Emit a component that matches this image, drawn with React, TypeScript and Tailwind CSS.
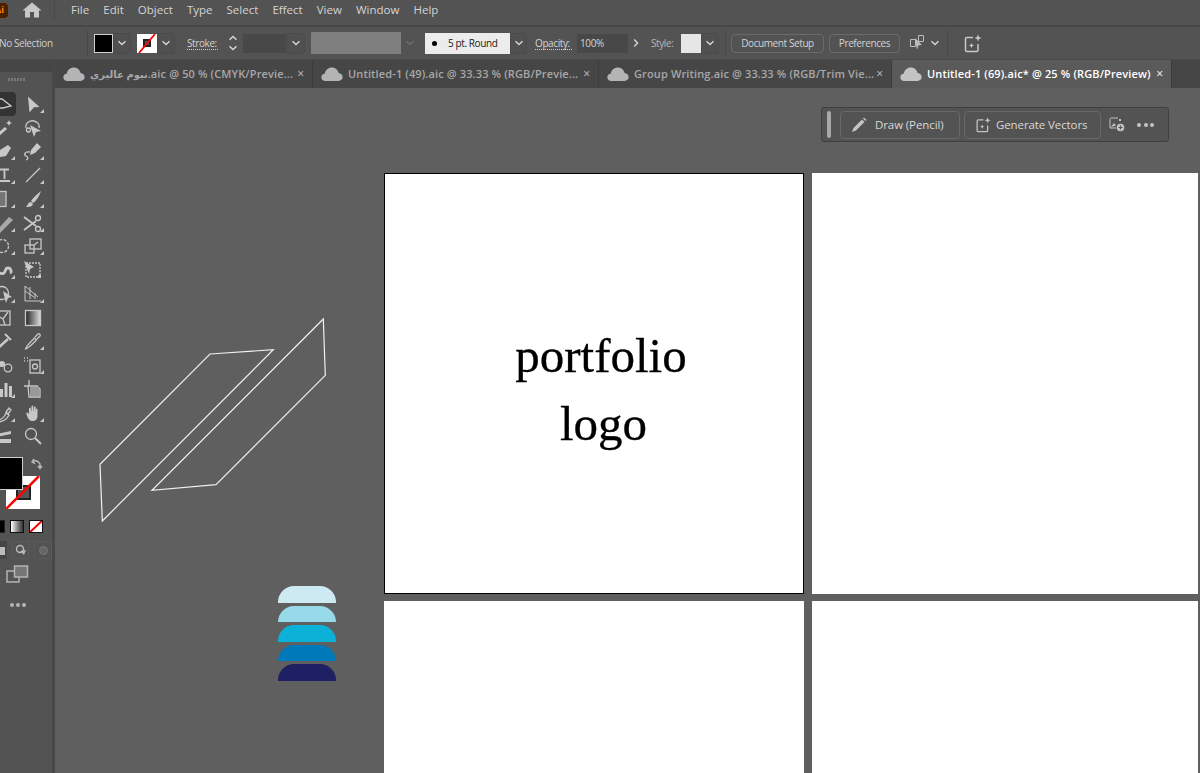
import type { ReactNode } from 'react';

const ui = { fontFamily: '"Open Sans", "DejaVu Sans", sans-serif' };

function Chevron({ className = 'text-[#d6d6d6]' }: { className?: string }) {
  return (
    <svg className={`h-2.5 w-2.5 ${className}`} viewBox="0 0 10 10" fill="none" stroke="currentColor" strokeWidth={1.4}>
      <path d="M1.5 3.2 5 6.6l3.5-3.4" />
    </svg>
  );
}

function ChevronBox({ className = 'w-[18px]' }: { className?: string }) {
  return (
    <div className={`flex h-[21px] items-center justify-center rounded-r-sm border border-[#4b4b4b] bg-[#505050] ${className}`}>
      <Chevron />
    </div>
  );
}

function Cloud({ className = 'text-[#b8b8b8]' }: { className?: string }) {
  return (
    <svg className={`h-[14px] w-[22px] shrink-0 ${className}`} viewBox="0 0 22 14" fill="currentColor">
      <path d="M4.5 14C2 14 .3 12.4.3 10.3c0-2 1.5-3.5 3.4-3.6C4.4 3 7.3.5 10.8.5c3.3 0 6 2.200 6.800 5.400 2.300.2 4.100 2 4.100 4.200 0 2.200-1.800 3.900-4.200 3.900z" />
    </svg>
  );
}

function Tab({ children, width, active }: { children: ReactNode; width: string; active?: boolean }) {
  return (
    <div className={`flex h-full shrink-0 items-center border-r border-[#3d3d3d] pl-[8px] ${width} ${active ? 'bg-[#5a5a5a]' : ''}`}>
      <Cloud className={active ? 'text-[#c4c4c4]' : 'text-[#b4b4b4]'} />
      <span className={`ml-[5px] whitespace-nowrap text-[11px] font-semibold tracking-[0.13px] ${active ? 'text-white' : 'text-[#a8a8a8]'}`}>{children}</span>
      <span className={`ml-auto mr-[8px] text-[12px] leading-none ${active ? 'text-white' : 'text-[#c0c0c0]'}`}>×</span>
    </div>
  );
}

// tool icon cell, with the little flyout triangle in the lower right corner
function Tool({ children, flyout = true, selected }: { children: ReactNode; flyout?: boolean; selected?: boolean }) {
  return (
    <div className={`relative flex h-[23.750px] w-6 items-center justify-center text-[#c8c8c8] ${selected ? 'rounded-sm bg-[#333333]' : ''}`}>
      <svg className="h-5 w-5" viewBox="0 0 20 20" fill="none" stroke="currentColor" strokeWidth={1.3}>
        {children}
      </svg>
      {flyout && <div className="absolute bottom-[3px] right-[1px] h-0 w-0 border-b-[4px] border-l-[4px] border-b-[#c8c8c8] border-l-transparent" />}
    </div>
  );
}

const solid = { fill: 'currentColor', stroke: 'none' };

// left column is cut by the window edge, only x >= 6 of each icon shows
const tools: { icon: ReactNode; flyout?: boolean; selected?: boolean }[] = [
  { icon: <path d="M2 5h6l9 7-8 2H2" />, flyout: false, selected: true },
  { icon: <path d="M5 2.500 16.500 13 11 13.300 6.500 18.500z" {...solid} /> },
  { icon: <><path d="M3 18 12 10" strokeWidth={3} /><path d="m15 2 .9 2.100L18 5l-2.100.9L15 8l-.9-2.100L12 5l2.100-.9z" {...solid} /></>, flyout: false },
  { icon: <><path d="M3 10C2 5 7 2 11 3c4 1 6 4 5 7" /><path d="M7 7l11 6-5 1-2 5z" {...solid} /><circle cx="5.500" cy="12" r="2" /></>, flyout: false },
  { icon: <path d="M6 16V9l8-5 3 3-5 8z" {...solid} /> },
  { icon: <><path d="M8 9l6-7 4 4-6 6-5 2z" {...solid} /><path d="M7 11C1 10 1 14 3 15s3 3 0 4" /></> },
  { icon: <path d="M6 4.500h9M10.500 4.500v9.500M6 16h10" strokeWidth={1.800} /> },
  { icon: <path d="M3 17 17 3" /> },
  { icon: <rect x="-4" y="2.500" width="16" height="15" fill="#747474" /> },
  { icon: <><path d="M18 2C14 5 10 9 8 12l2 2c3-2 6-6 8-12z" {...solid} /><path d="M8 13c-3 0-3 3-5 5 3 0 6 0 7-3z" {...solid} /></> },
  { icon: <path d="M1 19 15 4l4 3L5 21z" fill="#a8a8a8" stroke="none" /> },
  { icon: <><circle cx="15" cy="5" r="2.500" /><circle cx="15" cy="16" r="2.500" /><path d="M1 4l12 9M1 17l12-9" strokeWidth={1.800} /></> },
  { icon: <circle cx="8" cy="10" r="6.500" strokeDasharray="3 1.500" /> },
  { icon: <><rect x="2" y="9" width="9" height="8" /><rect x="7" y="3" width="11" height="10" /><path d="m11 9 4-3" /></> },
  { icon: <path d="M3 15c3-4 5 0 7-2s1-5 4-5 4 4 2 5" strokeWidth={2.800} /> },
  { icon: <><rect x="3" y="3" width="14" height="14" strokeDasharray="2 1" /><path d="M1 1l10 6-4 2-1 5z" {...solid} /><rect x="15" y="15" width="3" height="3" {...solid} /></>, flyout: false },
  { icon: <><circle cx="8" cy="9" r="6.500" /><path d="M9 7l9 6-4 1-2 5z" {...solid} /></> },
  { icon: <path d="M2 2v15h16M2 2l13 11M2 7l9 6M7 3v12M12 9v6" strokeWidth={1} /> },
  { icon: <><rect x="2" y="3" width="14" height="14" /><path d="M4 8l5 3 5-7M9 11l2 6" /></>, flyout: false },
  { icon: <><defs><linearGradient id="grad" x1="0" x2="1" y1="0" y2="0"><stop offset="0" stopColor="#222" /><stop offset="1" stopColor="#ddd" /></linearGradient></defs><rect x="2.500" y="2.500" width="15" height="15" fill="url(#grad)" /></>, flyout: false },
  { icon: <><path d="M4 17 14 8" strokeWidth={2.500} /><path d="M11 3l6 6" strokeWidth={2} /></>, flyout: false },
  { icon: <path d="M2.500 18c0-2 7-9 9-11l2 2c-2 2-9 9-11 9zM12 6l3-3c1-1 3 1 2 2l-3 3" /> },
  { icon: <><circle cx="8" cy="9" r="3" {...solid} /><circle cx="14" cy="13" r="3.800" /></>, flyout: false },
  { icon: <><rect x="7" y="5" width="10" height="13" /><circle cx="12" cy="11.500" r="2.500" /><path d="M1 3h1M4 3h1M1 6h1M4 6h1" strokeWidth={1.500} /></> },
  { icon: <path d="M6 10h3v8H6zM10.500 4h3v14h-3zM15 7h3v11h-3z" {...solid} /> },
  { icon: <><path d="M6 1v6H1M5 7h9l3 3v8H6z" /><rect x="7" y="8" width="9" height="9" fill="#999" stroke="none" /></>, flyout: false },
  { icon: <path d="M3 17c5 0 8-4 9-7l3 2c-2 4-6 7-12 7zM12 9l3-4 2 2-3 4z" /> },
  { icon: <path d="M6 11V5l1.500-.5L8.500 9V3l1.500-.5L11 9V3.500l1.500 0L13 10V5.500l1.500.5V13c0 3-2 5-5 5-3 0-4-2-5-4L3 10l1.500-.5z" {...solid} /> },
  { icon: <path d="M2 8l15-3v3L2 11zM2 13h15v4H2z" {...solid} />, flyout: false },
  { icon: <><circle cx="8" cy="8" r="5.500" /><path d="m12 12 6 6" strokeWidth={2} /></>, flyout: false },
];

function Toolbar() {
  return (
    <aside className="flex h-full w-[55px] shrink-0 flex-col overflow-hidden border-r-[3px] border-[#484848] bg-[#535353]">
      <div className="h-[12px] shrink-0 bg-[#464646]" />
      <div className="-ml-[8px] flex flex-col">
        <div className="flex h-[14px] items-center pl-[16px]">
          <div className="h-[3px] w-[17px] bg-[repeating-linear-gradient(90deg,#777_0_2px,transparent_2px_3px)]" />
        </div>
        <div className="h-[6px]" />
        <div className="grid grid-cols-[24px_24px] gap-x-[5px]">
          {tools.map((t, i) => (
            <Tool key={i} flyout={t.flyout} selected={t.selected}>{t.icon}</Tool>
          ))}
        </div>
        {/* fill and stroke */}
        <div className="relative ml-[8px] mt-[9px] h-[54px] w-[46px]">
          <div className="absolute bottom-[2px] right-[6px] flex h-[33px] w-[34px] items-center justify-center bg-white">
            <div className="h-[15px] w-[15px] border-2 border-[#222] bg-[#555]" />
            <svg className="absolute inset-0 h-full w-full" viewBox="0 0 34 33"><path d="M0 33 33 0" stroke="#f00" strokeWidth={2.500} /></svg>
          </div>
          <div className="absolute left-0 top-0 h-[33px] w-[23px] border border-[#cfcfcf] border-l-0 bg-black" />
          <svg className="absolute right-[3px] top-[1px] h-3 w-3 text-[#b8b8b8]" viewBox="0 0 12 12" fill="none" stroke="currentColor" strokeWidth={1.500}>
            <path d="M1 4c2-2 6-2 8 2v4M7 8l2 2.500L11 8M3 1 1 4l3 1.500" />
          </svg>
        </div>
        <div className="ml-[8px] mt-[8px] flex h-[14px] items-center gap-[5px]">
          <div className="h-[13px] w-[5px] border border-l-0 border-[#222] bg-black" />
          <div className="h-[13px] w-[14px] border border-[#111] bg-gradient-to-r from-white to-[#333]" />
          <div className="relative h-[13px] w-[14px] overflow-hidden border border-[#111] bg-white">
            <svg className="absolute inset-0 h-full w-full" viewBox="0 0 14 13"><path d="M0 13 14 0" stroke="#f00" strokeWidth={2.500} /></svg>
          </div>
        </div>
        <div className="ml-[8px] mt-[8px] flex h-[18px] items-center gap-[5px] text-[#b8b8b8]">
          <div className="flex h-[18px] w-[7px] items-end bg-[#454545]"><div className="mb-1 h-2 w-[5px] bg-[#bbb]" /></div>
          <div className="flex h-[18px] w-[18px] items-center justify-center border border-[#5a5a5a]">
            <svg className="h-3 w-3" viewBox="0 0 12 12"><circle cx="5" cy="5" r="3.500" fill="none" stroke="currentColor" strokeWidth={1.500} /><path d="M5 7l6-1-2 5z" fill="currentColor" /></svg>
          </div>
          <div className="flex h-[18px] w-[18px] items-center justify-center border border-[#5a5a5a]">
            <div className="h-[9px] w-[9px] rounded-full border border-[#777] bg-[#666]" />
          </div>
        </div>
        <div className="ml-[14px] mt-[6px]">
          <svg className="h-[18px] w-[24px] text-[#b4b4b4]" viewBox="0 0 24 18" fill="none" stroke="currentColor" strokeWidth={1.500}>
            <rect x="1" y="6" width="12" height="11" />
            <rect x="8.500" y="1" width="13" height="11" fill="#777" />
          </svg>
        </div>
        <div className="ml-[18px] mt-[20px] flex gap-[2px]">
          <div className="h-1 w-1 rounded-full bg-[#b4b4b4]" />
          <div className="h-1 w-1 rounded-full bg-[#b4b4b4]" />
          <div className="h-1 w-1 rounded-full bg-[#b4b4b4]" />
        </div>
      </div>
    </aside>
  );
}

function ControlBar() {
  return (
    <div className="flex h-[33px] items-center border-b border-[#484848] bg-[#535353] text-[10px] tracking-[-0.4px] text-[#d2d2d2]">
      <span className="-ml-[1px] w-[88px] shrink-0 whitespace-nowrap text-[#cfcfcf]">No Selection</span>
      <div className="h-[26px] w-px shrink-0 bg-[#4a4a4a]" />
      <div className="ml-[6px] h-[19px] w-[19px] shrink-0 border border-[#cfcfcf] bg-black" />
      <ChevronBox />
      <div className="relative ml-[6px] flex h-[19px] w-[20px] shrink-0 items-center justify-center bg-white">
        <div className="h-[8px] w-[8px] border-2 border-[#222] bg-[#555]" />
        <svg className="absolute inset-0 h-full w-full" viewBox="0 0 20 19"><path d="M2 19 18 0" stroke="#f00" strokeWidth={1.800} /></svg>
      </div>
      <ChevronBox />
      <span className="ml-[12px] w-[31px] shrink-0 border-b border-dotted border-[#d2d2d2] leading-[12px]">Stroke:</span>
      <div className="ml-[6px] flex h-[21px] w-[18px] shrink-0 flex-col items-center justify-center">
        <Chevron className="rotate-180 text-[#d6d6d6]" />
        <Chevron />
      </div>
      <div className="ml-px h-[19px] w-[43px] shrink-0 bg-[#484848]" />
      <ChevronBox className="ml-px w-[18px]" />
      <div className="ml-[6px] h-[22px] w-[90px] shrink-0 bg-[#7f7f7f]" />
      <div className="flex w-[18px] shrink-0 justify-center"><Chevron className="text-[#6e6e6e]" /></div>
      <div className="ml-[6px] flex h-[21px] w-[85px] shrink-0 items-center whitespace-nowrap bg-[#ececec] pl-[7px] text-[#1a1a1a]">
        <div className="h-[5px] w-[5px] rounded-full bg-black" />
        <span className="ml-[11px]">5 pt. Round</span>
      </div>
      <ChevronBox className="w-[17px]" />
      <span className="ml-[8px] w-[37px] shrink-0 border-b border-dotted border-[#d2d2d2] leading-[12px]">Opacity:</span>
      <div className="ml-[5px] flex h-[19px] w-[51px] shrink-0 items-center bg-[#484848] pl-[3px]">100%</div>
      <div className="flex w-[15px] shrink-0 justify-center"><Chevron className="-rotate-90 text-[#d6d6d6]" /></div>
      <span className="ml-[8px] w-[25px] shrink-0 text-[#b8b8b8]">Style:</span>
      <div className="ml-[5px] h-[19px] w-[20px] shrink-0 bg-[#e6e6e6]" />
      <ChevronBox />
      <div className="ml-[6px] h-[26px] w-px shrink-0 bg-[#4a4a4a]" />
      <div className="ml-[5px] flex h-[19px] w-[93px] shrink-0 items-center justify-center whitespace-nowrap rounded-sm border border-[#6b6b6b]">Document Setup</div>
      <div className="ml-[5px] flex h-[19px] w-[71px] shrink-0 items-center justify-center whitespace-nowrap rounded-sm border border-[#6b6b6b]">Preferences</div>
      <svg className="ml-[9px] h-[18px] w-[18px] shrink-0 text-[#bdbdbd]" viewBox="0 0 18 18" fill="none" stroke="currentColor">
        <path d="M1.500 5.500h5v7h-5zM9.500 1.500h5v6h-5z" />
        <path d="M6 4l7 7-3.500.3L8 16z" fill="currentColor" stroke="none" />
      </svg>
      <div className="ml-[3px]"><Chevron /></div>
      <div className="ml-[7px] h-[26px] w-px shrink-0 bg-[#4a4a4a]" />
      <Sparkle className="ml-[15px] h-[19px] w-[19px] shrink-0 text-[#c8c8c8]" />
    </div>
  );
}

function Sparkle({ className }: { className: string }) {
  return (
    <svg className={className} viewBox="0 0 19 19" fill="none" stroke="currentColor" strokeWidth={1.500}>
      <path d="M10 3.500H4a1.500 1.500 0 0 0-1.500 1.500v11A1.500 1.500 0 0 0 4 17.500h9.500a1.500 1.500 0 0 0 1.500-1.500v-6" />
      <path d="m15 .5 1 2.500 2.500 1-2.500 1-1 2.500-1-2.500-2.500-1 2.500-1zM8.500 9l.8 1.800 1.700.7-1.700.7-.8 1.800-.8-1.800-1.700-.7 1.700-.7z" fill="currentColor" stroke="none" />
    </svg>
  );
}

function ContextBar() {
  return (
    <div className="absolute left-[766px] top-[19px] flex h-[35px] w-[348px] items-center rounded-[3px] border border-[#3f3f3f] bg-[#535353] pl-[5px] text-[11.500px] tracking-[-0.1px] text-[#d8d8d8]">
      <div className="h-[27px] w-[4px] rounded-sm bg-[#a8a8a8]" />
      <div className="ml-[9px] flex h-[28px] w-[120px] items-center rounded-sm border border-[#686868] pl-[10px]">
        <svg className="h-[16px] w-[16px] text-[#c4c4c4]" viewBox="0 0 16 16" fill="currentColor">
          <path d="M11 2.500 13.500 5 5 13.500 1 15l1.500-4zM12 1.500l1-1 2.500 2.500-1 1z" />
        </svg>
        <span className="ml-[8px] whitespace-nowrap">Draw (Pencil)</span>
      </div>
      <div className="ml-[4px] flex h-[28px] w-[137px] items-center rounded-sm border border-[#686868] pl-[10px]">
        <Sparkle className="h-[16px] w-[16px] text-[#c4c4c4]" />
        <span className="ml-[5px] whitespace-nowrap">Generate Vectors</span>
      </div>
      <svg className="ml-[8px] h-[15px] w-[16px] text-[#c4c4c4]" viewBox="0 0 16 15" fill="none" stroke="currentColor">
        <path d="M9 1H2.500A1.500 1.500 0 0 0 1 2.500v8.500h6" />
        <path d="M2 10l3-4 2 2.500" fill="currentColor" stroke="none" />
        <rect x="10" y="2" width="2" height="2" fill="currentColor" stroke="none" />
        <circle cx="11.500" cy="10.500" r="3.800" fill="currentColor" stroke="none" />
        <path d="M11.500 8.500v4M9.500 10.500h4" stroke="#535353" strokeWidth={1.200} />
      </svg>
      <div className="ml-[12px] flex gap-[2.500px]">
        <div className="h-[4px] w-[4px] rounded-full bg-[#c4c4c4]" />
        <div className="h-[4px] w-[4px] rounded-full bg-[#c4c4c4]" />
        <div className="h-[4px] w-[4px] rounded-full bg-[#c4c4c4]" />
      </div>
    </div>
  );
}

export default function App() {
  return (
    <div className="flex h-[773px] w-[1200px] flex-col overflow-hidden bg-[#535353]" style={ui}>
      {/* Menu bar */}
      <div className="flex h-[27px] shrink-0 items-center border-b-2 border-[#484848] pb-[5px] text-[11.500px] text-[#d4d4d4]">
        <div className="flex h-[15px] w-[8px] items-center overflow-hidden rounded-r-sm bg-[#4a2000] text-[9px] font-bold text-[#ff8a00]">
          <span className="-ml-[5px]">Ai</span>
        </div>
        <svg className="ml-[14px] h-[16px] w-[20px] text-[#c8c8c8]" viewBox="0 0 20 16" fill="currentColor">
          <path d="M10 .5 19.500 8.500H17V15.500H12V10H8v5.500H3V8.500H.5z" />
        </svg>
        <div className="ml-[12px] h-[20px] w-px bg-[#4a4a4a]" />
        <nav className="ml-[16px] flex gap-[14.100px] whitespace-nowrap">
          {['File', 'Edit', 'Object', 'Type', 'Select', 'Effect', 'View', 'Window', 'Help'].map((m) => (
            <span key={m}>{m}</span>
          ))}
        </nav>
      </div>
      <ControlBar />
      <div className="flex min-h-0 flex-1">
        <Toolbar />
        <main className="flex min-w-0 flex-1 flex-col">
          {/* Document tabs */}
          <div className="flex h-[28px] shrink-0 bg-[#464646]">
            <Tab width="w-[258px]"><span className="text-[10px]">نيوم غاليري</span>.aic @ 50 % (CMYK/Previe...</Tab>
            <Tab width="w-[286px]">Untitled-1 (49).aic @ 33.33 % (RGB/Previe...</Tab>
            <Tab width="w-[293px]">Group Writing.aic @ 33.33 % (RGB/Trim Vie...</Tab>
            <Tab width="w-[280px]" active>Untitled-1 (69).aic* @ 25 % (RGB/Preview)</Tab>
          </div>
          {/* Canvas */}
          <div className="relative min-h-0 flex-1 overflow-hidden bg-[#5f5f5f]">
            <ContextBar />

            <div className="absolute left-[329px] top-[85px] grid grid-cols-[420px_386px] grid-rows-[421px_200px] gap-x-[8px] gap-y-[7px]">
              <div className="flex flex-col items-center border border-black bg-white pl-[14px] pt-[148px] text-[49px] leading-[68px] text-black [-webkit-text-stroke:0.3px_black]" style={{ fontFamily: '"Liberation Serif", serif' }}>
                <span>portfolio</span>
                <span className="ml-[5px]">logo</span>
              </div>
              <div className="bg-white" />
              <div className="bg-white" />
              <div className="bg-white" />
            </div>

            <svg className="absolute left-0 top-[227px] h-[210px] w-[280px]" viewBox="55 315 280 210" fill="none" stroke="#f0f0f0" strokeWidth={1.200}>
              <path d="M210 354 273.300 349.700 102.300 521 100 464.300z" />
              <path d="M323.300 319 325.300 375.300 216 484.700 152 490.300z" />
            </svg>

            <div className="absolute left-[223px] top-[498px] flex w-[58px] flex-col gap-[3px]">
              <div className="h-[16.500px] rounded-t-[16px] bg-[#cdeaf3]" />
              <div className="h-[16.500px] rounded-t-[16px] bg-[#97d9e8]" />
              <div className="h-[16.500px] rounded-t-[16px] bg-[#0cb1d8]" />
              <div className="h-[16.500px] rounded-t-[16px] bg-[#0079b8]" />
              <div className="h-[16.500px] rounded-t-[16px] bg-[#1f1f63]" />
            </div>
          </div>
        </main>
      </div>
    </div>
  );
}
